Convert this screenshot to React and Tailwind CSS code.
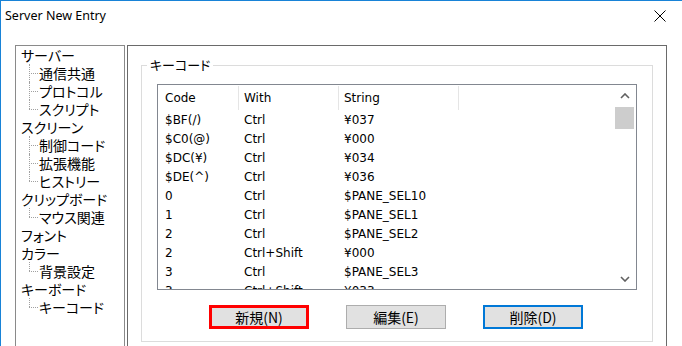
const tree = [
  { label: 'サーバー', children: ['通信共通', 'プロトコル', 'スクリプト'] },
  { label: 'スクリーン', children: ['制御コード', '拡張機能', 'ヒストリー'] },
  { label: 'クリップボード', children: ['マウス関連'] },
  { label: 'フォント', children: [] },
  { label: 'カラー', children: ['背景設定'] },
  { label: 'キーボード', children: ['キーコード'] },
]

const rows = [
  ['$BF(/)', 'Ctrl', '¥037'],
  ['$C0(@)', 'Ctrl', '¥000'],
  ['$DC(¥)', 'Ctrl', '¥034'],
  ['$DE(^)', 'Ctrl', '¥036'],
  ['0', 'Ctrl', '$PANE_SEL10'],
  ['1', 'Ctrl', '$PANE_SEL1'],
  ['2', 'Ctrl', '$PANE_SEL2'],
  ['2', 'Ctrl+Shift', '¥000'],
  ['3', 'Ctrl', '$PANE_SEL3'],
  ['3', 'Ctrl+Shift', '¥033'],
]

const jp = "font-['Noto_Sans_CJK_JP',sans-serif] [font-feature-settings:'palt']"
const listFont = "font-['DejaVu_Sans','Noto_Sans_CJK_JP',sans-serif]"

function Chevron({ down }) {
  return (
    <svg width="10" height="6" viewBox="0 0 10 6">
      <polyline
        points={down ? '1,1 5,5 9,1' : '1,5 5,1 9,5'}
        fill="none"
        stroke="#606060"
        strokeWidth="1.6"
      />
    </svg>
  )
}

function TreeChild({ label, last }) {
  return (
    <div className="h-[18px] leading-[18px] flex items-center pl-[5px]">
      <div className="relative w-[18px] self-stretch shrink-0">
        <span
          className={`absolute left-[8px] top-0 border-l border-dotted border-[#a0a0a0] ${last ? 'h-[9px]' : 'h-[18px]'}`}
        />
        <span className="absolute left-[8px] top-[9px] w-[9px] border-t border-dotted border-[#a0a0a0]" />
      </div>
      <span className="whitespace-nowrap">{label}</span>
    </div>
  )
}

function Tree() {
  return (
    <div className={`w-[110px] h-[320px] shrink-0 border border-[#8a8a8a] text-[14px] leading-[18px] text-black ${jp}`}>
      {tree.map((node) => (
        <div key={node.label}>
          <div className="h-[18px] flex items-center pl-[5px] whitespace-nowrap">{node.label}</div>
          {node.children.map((c, i) => (
            <TreeChild key={c} label={c} last={i === node.children.length - 1} />
          ))}
        </div>
      ))}
    </div>
  )
}

function KeyList() {
  return (
    <div className={`w-[480px] h-[206px] border border-[#828790] flex ${listFont} text-[12px] text-black`}>
      <div className="flex-1 overflow-hidden">
        <div className="h-[25px] flex items-center">
          <div className="w-[81px] h-[24px] flex items-center pl-[7px] border-r border-[#e5e5e5]">Code</div>
          <div className="w-[100px] h-[24px] flex items-center pl-[5px] border-r border-[#e5e5e5]">With</div>
          <div className="w-[120px] h-[24px] flex items-center pl-[5px] border-r border-[#e5e5e5]">String</div>
        </div>
        {rows.map((r, i) => (
          <div key={i} className="h-[19px] flex items-center whitespace-nowrap">
            <div className="w-[81px] pl-[7px]">{r[0]}</div>
            <div className="w-[100px] pl-[5px]">{r[1]}</div>
            <div className="w-[120px] pl-[5px]">{r[2]}</div>
          </div>
        ))}
      </div>
      <div className="w-[21px] flex flex-col">
        <div className="h-[22px] flex items-center justify-center pr-[2px]">
          <Chevron />
        </div>
        <div className="h-[22px] w-[19px] bg-[#cdcdcd]" />
        <div className="flex-1" />
        <div className="h-[21px] flex items-center justify-center pr-[2px]">
          <Chevron down />
        </div>
      </div>
    </div>
  )
}

function Button({ label, className }) {
  return (
    <button className={`w-[100px] h-[24px] bg-[#e1e1e1] text-[14px] leading-[18px] text-black flex items-center justify-center ${jp} ${className}`}>
      {label}
    </button>
  )
}

export default function App() {
  return (
    <div className="w-[682px] h-[346px] overflow-hidden bg-white border-l border-t border-[#1883d7] flex flex-col">
      <div className="h-[30px] shrink-0 flex items-center justify-between pl-[4px] pr-[16px]">
        <span className="font-['Noto_Sans',sans-serif] text-[12.5px] text-black">Server New Entry</span>
        <svg width="12" height="12" viewBox="0 0 12 12">
          <path d="M0.5 0.5 L11.5 11.5 M11.5 0.5 L0.5 11.5" stroke="#000" strokeWidth="1" />
        </svg>
      </div>
      <div className="flex pl-[14px] pt-[14px] gap-[2px]">
        <Tree />
        <div className="w-[540px] h-[320px] shrink-0 border border-[#6a6a6a] px-[13px] pt-[10px]">
          <fieldset className="w-[512px] h-[286px] border border-[#dcdcdc] p-0 m-0">
            <legend className={`ml-[5px] px-[3px] text-[13px] leading-[18px] text-black ${jp}`}>キーコード</legend>
            <div className="ml-[15px] mt-[10px]">
              <KeyList />
              <div className="flex gap-[37px] mt-[15px] ml-[52px]">
                <Button label="新規(N)" className="border-[3px] border-[#ff0000]" />
                <Button label="編集(E)" className="border border-[#adadad]" />
                <Button label="削除(D)" className="border-2 border-[#0078d7]" />
              </div>
            </div>
          </fieldset>
        </div>
      </div>
    </div>
  )
}
